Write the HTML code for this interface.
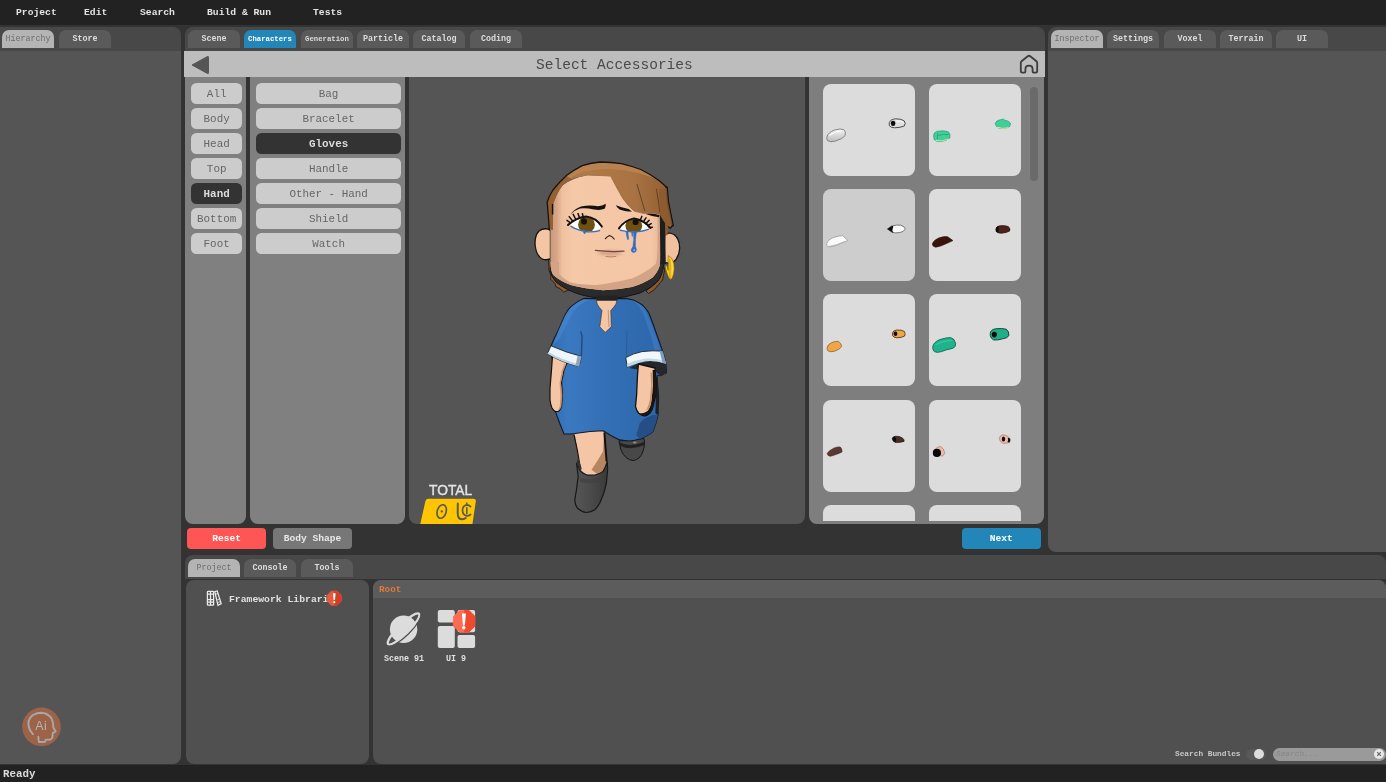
<!DOCTYPE html>
<html>
<head>
<meta charset="utf-8">
<title>Editor</title>
<style>
html,body{margin:0;padding:0;}
body{width:1386px;height:782px;overflow:hidden;background:#333333;font-family:"Liberation Mono",monospace;position:relative;}
.abs{position:absolute;}
.menu,.tab,.btn,.txt{will-change:transform;}
.menubar{left:0;top:0;width:1386px;height:25px;background:#222222;}
.menu{position:absolute;top:0;height:25px;line-height:25px;font-size:9.7px;font-weight:bold;color:#e4e4e4;white-space:pre;}
.strip{background:#484848;}
.tab{position:absolute;height:18px;width:52px;border-radius:7px 7px 0 0;background:#5a5a5a;color:#dcdcdc;font-weight:bold;font-size:8.4px;line-height:19px;text-align:center;white-space:pre;overflow:hidden;}
.tab.sel{background:#b4b4b4;color:#6e6e6e;font-weight:normal;}
.tab.blue{background:#2286b8;color:#ffffff;}
.btn{position:absolute;height:20.8px;border-radius:5.5px;background:#cccccc;color:#666666;font-size:10.9px;line-height:22.4px;text-align:center;white-space:pre;}
.btn.on{background:#333333;color:#dddddd;font-weight:bold;}
.card{position:absolute;width:92px;height:92px;border-radius:8px;background:#dcdcdc;}
</style>
</head>
<body>
<!-- menu bar -->
<div class="abs menubar"></div>
<div class="menu" style="left:15.5px;">Project</div>
<div class="menu" style="left:83.5px;">Edit</div>
<div class="menu" style="left:139.5px;">Search</div>
<div class="menu" style="left:207px;">Build &amp; Run</div>
<div class="menu" style="left:312.5px;">Tests</div>

<!-- left panel -->
<div class="abs strip" style="left:0;top:27px;width:181px;height:24px;border-radius:0 8px 0 0;"></div>
<div class="abs" style="left:0;top:51px;width:181px;height:712.8px;background:#555555;border-radius:0 0 8px 0;"></div>
<div class="tab sel" style="left:2px;top:30px;">Hierarchy</div>
<div class="tab" style="left:58.5px;top:30px;">Store</div>

<!-- center panel -->
<div class="abs strip" style="left:184.8px;top:27px;width:859.8px;height:24px;border-radius:8px 8px 0 0;"></div>
<div id="ctabs"></div>
<div class="tab" style="left:187.8px;top:30px;">Scene</div>
<div class="tab blue" style="left:244.2px;top:30px;font-size:7.3px;">Characters</div>
<div class="tab" style="left:300.5px;top:30px;font-size:7.3px;">Generation</div>
<div class="tab" style="left:356.8px;top:30px;">Particle</div>
<div class="tab" style="left:413.2px;top:30px;">Catalog</div>
<div class="tab" style="left:469.5px;top:30px;">Coding</div>

<!-- header bar -->
<div class="abs" style="left:183.8px;top:51px;width:860.8px;height:26px;background:#bdbdbd;"></div>
<div class="abs txt" style="left:183.8px;top:51px;width:860.8px;height:26px;line-height:28.4px;text-align:center;font-size:14.5px;color:#4a4a4a;">Select Accessories</div>
<svg class="abs" style="left:188.5px;top:54px;" width="24" height="22" viewBox="0 0 24 22"><path d="M3 11 L18.5 2.5 Q19.5 2 19.5 3.2 L19.5 18.8 Q19.5 20 18.5 19.5 Z" fill="#555555" stroke="#555555" stroke-width="1" stroke-linejoin="round"/></svg>
<svg class="abs" style="left:1017px;top:52px;" width="24" height="24" viewBox="1017 52 24 24"><path d="M1020.8 71 V62.8 Q1020.8 62 1021.5 61.3 L1027.8 56.2 Q1029 55.3 1030.2 56.2 L1036.5 61.3 Q1037.2 62 1037.2 62.8 V71 Q1037.2 72.6 1035.6 72.6 H1033.6 Q1032.6 72.6 1032.6 71.6 V69 Q1032.6 65.6 1029 65.6 Q1025.4 65.6 1025.4 69 V71.6 Q1025.4 72.6 1024.4 72.6 H1022.4 Q1020.8 72.6 1020.8 71 Z" fill="none" stroke="#3c3c3c" stroke-width="1.8" stroke-linejoin="round"/></svg>

<!-- category columns -->
<div class="abs" style="left:184.8px;top:77px;width:61px;height:447px;background:#808080;border-radius:0 0 8px 8px;"></div>
<div class="abs" style="left:249.8px;top:77px;width:154.8px;height:447px;background:#808080;border-radius:0 0 8px 8px;"></div>
<div class="btn" style="left:191px;top:83.4px;width:51.3px;">All</div>
<div class="btn" style="left:191px;top:108.25px;width:51.3px;">Body</div>
<div class="btn" style="left:191px;top:133.1px;width:51.3px;">Head</div>
<div class="btn" style="left:191px;top:157.95px;width:51.3px;">Top</div>
<div class="btn on" style="left:191px;top:182.8px;width:51.3px;">Hand</div>
<div class="btn" style="left:191px;top:207.65px;width:51.3px;">Bottom</div>
<div class="btn" style="left:191px;top:232.5px;width:51.3px;">Foot</div>

<div class="btn" style="left:255.8px;top:83.4px;width:145.2px;">Bag</div>
<div class="btn" style="left:255.8px;top:108.25px;width:145.2px;">Bracelet</div>
<div class="btn on" style="left:255.8px;top:133.1px;width:145.2px;">Gloves</div>
<div class="btn" style="left:255.8px;top:157.95px;width:145.2px;">Handle</div>
<div class="btn" style="left:255.8px;top:182.8px;width:145.2px;">Other - Hand</div>
<div class="btn" style="left:255.8px;top:207.65px;width:145.2px;">Shield</div>
<div class="btn" style="left:255.8px;top:232.5px;width:145.2px;">Watch</div>

<!-- viewport -->
<div class="abs" id="viewport" style="left:409px;top:77px;width:396px;height:447px;background:#555555;border-radius:0 0 8px 8px;overflow:hidden;">
<!--CHARSTART--><svg style="position:absolute;left:0;top:0;" width="396" height="447" viewBox="409 77 396 447">
<defs>
<linearGradient id="gHair" x1="0" y1="0" x2="1" y2="0"><stop offset="0" stop-color="#9a6536"/><stop offset="0.25" stop-color="#b07a48"/><stop offset="0.7" stop-color="#a87242"/><stop offset="1" stop-color="#8f5d31"/></linearGradient>
<linearGradient id="gFace" x1="550.4" y1="0" x2="662.3" y2="0" gradientUnits="userSpaceOnUse"><stop offset="0" stop-color="#cc9a7b"/><stop offset="0.055" stop-color="#d6a486"/><stop offset="0.105" stop-color="#efc1a0"/><stop offset="0.2" stop-color="#f5c8a8"/><stop offset="0.9" stop-color="#f4c6a5"/><stop offset="0.95" stop-color="#eebf9e"/><stop offset="0.965" stop-color="#d6a587"/><stop offset="1" stop-color="#d0a082"/></linearGradient>
<linearGradient id="gChin" x1="0" y1="0" x2="0" y2="1"><stop offset="0" stop-color="#d9a384" stop-opacity="0"/><stop offset="0.55" stop-color="#d9a384" stop-opacity="0"/><stop offset="1" stop-color="#cf9a7c" stop-opacity="0.95"/></linearGradient>
<linearGradient id="gDress" x1="0" y1="0" x2="1" y2="0"><stop offset="0" stop-color="#2f6db4"/><stop offset="0.15" stop-color="#3a78c0"/><stop offset="0.5" stop-color="#336fb5"/><stop offset="1" stop-color="#2c66aa"/></linearGradient>
<linearGradient id="gBoot" x1="0" y1="0" x2="1" y2="0"><stop offset="0" stop-color="#565656"/><stop offset="0.5" stop-color="#4a4a4a"/><stop offset="1" stop-color="#3a3a3a"/></linearGradient>
<clipPath id="cEyeL"><path d="M570 224.8 Q576 218.6 586 217 Q596 218.2 601.6 227 Q599 231 588 231.6 Q577 230.2 570 224.8 Z"/></clipPath>
<clipPath id="cEyeR"><path d="M619.4 228.2 Q624 221.6 634 219 Q644 221 649.6 228 Q646 231 635 231.8 Q624 231.8 619.4 228.2 Z"/></clipPath>
<filter id="blur1" x="-20%" y="-50%" width="140%" height="300%"><feGaussianBlur stdDeviation="1.6"/></filter>
<filter id="blur2" x="-10%" y="-30%" width="120%" height="160%"><feGaussianBlur stdDeviation="0.6"/></filter>
<clipPath id="cFace"><use href="#face"/></clipPath>
</defs>

<!-- hair back lower bits -->
<path d="M548.4 258 L549 270 L551 276 L550.6 279 L555 283.6 L556 287 L560 288.6 L563.5 292 L569 290 L558 278 L553 262 Z" fill="#8f5d30" stroke="#1a1410" stroke-width="0.8"/>
<path d="M665 268 L662.5 280 L654 290 L648.5 293.5 L646 291 L656 283 L661 268 Z" fill="#8a5a2e" stroke="#1a1410" stroke-width="0.8"/>

<!-- ears -->
<path d="M553 231 Q545 226.5 539 231 Q534.2 236 535.2 246 Q536.5 256 542.5 259.2 Q548 261 553 257 Z" fill="#f4c6a5" stroke="#141414" stroke-width="1.3"/>
<path d="M662 236 Q668 231 674 234.5 Q680 239 679.6 249 Q678.5 258.5 673 262.2 Q667 264.5 662 261 Z" fill="#f0c09f" stroke="#141414" stroke-width="1.3"/>

<!-- dark jaw band / head back -->
<path d="M550.3 230 L550.3 271 Q551.5 277.5 556 282 Q566 290.5 582 295 Q598 298.8 609 298.8 Q626 297.6 640 293 Q652 288 658 281 Q662.5 275 664 264 L665 232 L664 212 L655 205 L600 190 Z" fill="#2b2b2b" stroke="#141414" stroke-width="1"/>

<!-- face -->
<path id="face" d="M553 204.5 Q556 194 562.5 185.5 Q571 178.5 587.5 175.3 L612 176.3 L660 200 L660.9 235 L660.7 255 Q660.3 262 659.6 266 Q658 271.6 652.6 277.5 Q644 283.4 632 287 Q617 290 603 290.2 Q585 288.8 570.7 285 Q560 281 553.3 275 Q550.6 271 550.4 262 L550.4 230 L552.6 214 Z" fill="url(#gFace)"/>
<path d="M549 262 L559 262 L559 273 Q561 277.4 570 282.2 Q581 284.8 596 285 Q611.6 283.4 632 278.6 Q647.5 271.4 655.7 263.9 Q657.8 258 658.2 240 L658.8 212 L664 212 L664 300 L549 300 Z" fill="#d4a385" filter="url(#blur2)" clip-path="url(#cFace)"/>

<!-- mouth -->
<ellipse cx="610" cy="253" rx="12" ry="2.6" fill="#c98f78" opacity="0.7" filter="url(#blur1)"/>
<path d="M595.3 250.4 Q610 252.2 624 251.2" fill="none" stroke="#6e463a" stroke-width="1.2" stroke-linecap="round"/>
<path d="M605.6 256.5 Q611 257.3 616.2 256.4" fill="none" stroke="#b98068" stroke-width="1"/>
<!-- nose -->
<path d="M605.4 238.6 Q607 236.6 609.6 235.5 Q612.4 236.6 614.2 239" fill="none" stroke="#2c1d16" stroke-width="1.2" stroke-linecap="round"/>

<!-- eyes -->
<path d="M570 224.8 Q576 218.6 586 217 Q596 218.2 601.6 227 Q599 231 588 231.6 Q577 230.2 570 224.8 Z" fill="#ffffff"/>
<g clip-path="url(#cEyeL)"><circle cx="586.5" cy="224.6" r="8.4" fill="#6e5011"/><circle cx="584" cy="221.4" r="3.1" fill="#15100a"/></g>
<path d="M568 225 Q575.5 217.8 586 216.4 Q596.5 217.6 601.8 226.6" fill="none" stroke="#15100c" stroke-width="2" stroke-linecap="round"/>
<path d="M570.6 223 L567 220.4 M572.6 221 L569.2 216.6 M575.6 219 L573.2 214.4 M579.4 217.6 L578 213.6 M583.2 217 L582.4 213.8" fill="none" stroke="#15100c" stroke-width="1.5" stroke-linecap="round"/>
<path d="M571 226.4 Q578 230.6 588 231.8 Q595 232 599.5 230.6" fill="none" stroke="#2f70c6" stroke-width="1.3" stroke-linecap="round"/>
<path d="M582.5 231.6 L584.6 234.2 L586.5 232" fill="#2f70c6"/>

<path d="M619.4 228.2 Q624 221.6 634 219 Q644 221 649.6 228 Q646 231 635 231.8 Q624 231.8 619.4 228.2 Z" fill="#ffffff"/>
<g clip-path="url(#cEyeR)"><circle cx="633.8" cy="225.6" r="8.4" fill="#6e5011"/><circle cx="635.6" cy="222" r="3.1" fill="#15100a"/></g>
<path d="M619 228.4 Q624 220.8 634 218.4 Q644.5 220.2 650.5 228" fill="none" stroke="#15100c" stroke-width="2" stroke-linecap="round"/>
<path d="M640.4 220 L641.8 216.4 M643.4 221.6 L646 217.8 M645.8 223.6 L649.2 220.2 M647.8 225.6 L651.2 223.6 M649.2 227.6 L652.4 227.2" fill="none" stroke="#15100c" stroke-width="1.5" stroke-linecap="round"/>
<path d="M620.4 230.4 Q628 232.2 636 231.8 Q643 231.4 648.4 229.4" fill="none" stroke="#2f70c6" stroke-width="1.3" stroke-linecap="round"/>
<!-- tears -->
<path d="M626 231.4 Q626.6 236 627.6 239.6 Q628.6 240 628.6 238 Q628 234.6 628 231.6 Z" fill="#2f70c6" stroke="#2f70c6" stroke-width="0.6"/>
<path d="M631.2 231.8 L631.8 236.6 Q632.6 237 632.8 236 L633 231.8 Z" fill="#2f70c6"/>
<path d="M633.6 231.8 Q634.2 240 633 246.4 Q630.6 249.6 631.6 251.4 Q633.6 253.4 635.8 251.6 Q637.2 249.6 635.4 246.4 Q635 240 636.4 231.8 Z" fill="#2f70c6" stroke="#2861b0" stroke-width="0.5"/>
<circle cx="634.2" cy="250.2" r="1" fill="#8fb6e6"/>

<!-- eyebrows -->
<path d="M570.4 214.4 Q574 209 581 206.4 Q590 204.8 598 206.2 Q602.6 206 605.6 203.8 Q606.4 206.6 604.6 208.8 Q600 210.6 594 209.4 Q586 207.6 580 208.4 Q574.6 210 570.4 214.4 Z" fill="#17110d"/>
<path d="M616 205.2 Q621 207.2 628.6 209 L632 211.6 Q624 211.2 619.6 209.4 Q616.4 207.6 616 205.2 Z" fill="#17110d"/>

<!-- hair front -->
<path d="M549.4 230 L547.2 202 Q549 196 553 190 Q559 182.5 566.8 175.3 Q574.5 169.5 582.3 165.6 Q591.4 162.8 600.5 162 Q611 162 621.3 163.6 Q630.4 165.6 640.8 169.5 Q650 174 659 180.5 Q664 184.6 666.8 187.7 L668 202 L670.6 215 L672.8 225.4 L670.4 228.2 L668 226.6 Q665 222.4 662.9 220 L659.6 214.8 L655 213.8 L650 213.2 L644.7 213.6 L634.3 211 Q629 207 622.6 198 Q616 186.4 611 176.6 L600.5 176 L587.5 175.3 Q578 177 572 179.2 Q566 182 562.9 185 Q560 188.6 557.7 192.9 Q555 198.4 553 204.6 L553 230 Z" fill="url(#gHair)"/>
<path d="M566.8 175.3 Q574.5 169.5 582.3 165.6 Q591.4 162.8 600.5 162 Q611 162 621.3 163.6 Q630.4 165.6 640.8 169.5 Q650 174 659 180.5 Q650 176 640 173.4 Q625 169.4 610 169 Q592 169 580 173 Q572 176.4 568 180 Z" fill="#bb8552" opacity="0.8"/>
<path d="M549.4 229 L547.8 203 Q550 196 553.6 190.6 Q559.6 183 567 176.2 L572 179.2 Q566 182 562.9 185 Q560 188.6 557.7 192.9 Q555 198.4 553 204.6 L553 229 Z" fill="#8d5c2d" opacity="0.7"/>
<path d="M549.4 230 L547.2 202 Q549 196 553 190 Q559 182.5 566.8 175.3 Q574.5 169.5 582.3 165.6 Q591.4 162.8 600.5 162 Q611 162 621.3 163.6 Q630.4 165.6 640.8 169.5 Q650 174 659 180.5 Q664 184.6 666.8 187.7 L668 202 L670.6 215 L672.8 225.4 L670.4 228.2 L668 226.6" fill="none" stroke="#17120e" stroke-width="1.3" stroke-linejoin="round" stroke-linecap="round"/>
<path d="M552.6 204 L552.6 214.5" stroke="#17120e" stroke-width="1.5"/>
<path d="M666.8 187.7 L668 202 L670.6 215 L672.8 225.4" fill="none" stroke="#17120e" stroke-width="2.2" stroke-linecap="round"/>
<path d="M611 176.8 Q616 186.6 622.6 198.2 Q629 207.2 634.3 211.2 L644.7 213.8" fill="none" stroke="#7a4c24" stroke-width="0.7" opacity="0.8"/>
<path d="M636.9 183.8 Q641 198 644.9 211" fill="none" stroke="#4a2f18" stroke-width="0.7"/>
<path d="M656.4 189 Q658.6 201 659.8 212.4" fill="none" stroke="#4a2f18" stroke-width="0.7"/>
<path d="M659 189 L666.8 188 L668 202 L670.6 215 L672.6 225 L668 226.4 Q665 222 662.9 220 L660 214.6 Z" fill="#8a5a2e" opacity="0.8"/>
<!-- side hair + dark strip right of face under bangs -->
<path d="M663.6 220.6 Q665.6 223 668 226.6 L667.6 235 L664.6 236 Z" fill="#8a5a2e"/>
<path d="M659.8 214.6 L662.9 220.2 L665 223 L665.8 264 L660.4 264 Z" fill="#1e1e1e"/>
<path d="M645 213.8 L650 213.4 L655 214 L659.6 215.2 L659 217.2 L652 216 Z" fill="#17120e"/>

<!-- earring -->
<path d="M668.3 255.6 Q672.4 257.4 673.8 263 Q675 269 673.4 275 Q672.4 278.6 670.8 279.4 Q668.6 278.4 667.6 275 L666.6 272 Q665.2 268.4 665.4 265.8 L667.2 265.6 Q667.4 268.6 668.2 270.4 Q668.6 264 668 259.6 Z" fill="#f6c924" stroke="#6e560c" stroke-width="0.5"/>
<path d="M669.6 259 Q670.8 266 669.8 274 Q669.6 276.4 670.4 278" fill="none" stroke="#c79c0e" stroke-width="0.9"/>
<path d="M671.4 260 Q673.2 266 672.2 274" fill="none" stroke="#ffe26a" stroke-width="0.9" opacity="0.8"/>

<!-- legs / boots -->
<!-- back foot -->
<path d="M618.9 441 L621 450 Q623 455 626 457.4 Q629.6 460.4 633 460.6 Q636.6 460 639 458 Q642 455 643 451 Q644.4 447 644.6 443 L644 438.6 Z" fill="#484848" stroke="#15181c" stroke-width="1"/>
<path d="M619.4 442.6 Q631 447.6 644.4 441.8 L644.4 445 Q631 451 620.2 446 Z" fill="#222222"/>
<ellipse cx="634.8" cy="442.6" rx="2" ry="1" fill="#b47c58"/>
<!-- front leg -->
<path d="M574 430 L604.2 429 L605.1 444.8 L606.4 462 L603 472 L594 476 L586 475 L580.7 470 L577.3 449.8 Z" fill="#f4c6a5"/>
<path d="M604.2 432 L605.1 444.8 L606.4 462 L603.4 471.6 L598 474.4 L591.5 469.8 Q597.5 461 603 451.5 Z" fill="#b98561"/>
<path d="M574 434.9 L577.3 449.8 L580.7 469.8" fill="none" stroke="#15100c" stroke-width="1.1"/>
<path d="M604.4 432.4 L605.3 444.8 L606.6 461.5" fill="none" stroke="#15100c" stroke-width="2"/>
<!-- boot -->
<path d="M576.5 463 L578.2 476.4 L576.5 489.7 L574.8 499.7 Q575 505 577.3 508 Q581.6 512 586.5 512.5 Q591 512 594.8 509.7 Q597.8 507 599.8 503 L603.9 493 L606.4 483 L607.6 469.8 L607.3 461.5 Q605.6 467.6 603 471.4 Q599 474.6 594.8 475 Q590 475.4 586.5 474.8 Q583 473.6 580.7 471.4 Q578.4 467.6 576.5 463 Z" fill="url(#gBoot)" stroke="#15181c" stroke-width="1.2" stroke-linejoin="round"/>
<path d="M576.5 463 Q578.4 467.6 580.7 471.4 L581.6 468 L578 458 Z" fill="#333333"/>
<path d="M580 478 Q590 481 604 476 L603 481 Q590 485 580.4 482 Z" fill="#404040" opacity="0.6"/>

<!-- dress -->
<path id="dress" d="M596 298.6 L583.7 298.4 Q577 301 570.6 306.9 Q567 310.6 565 315 L558.4 329.9 L553.5 340 L550.7 346.8 L552 358 L556 366 L553 390 L555.7 412.4 L560 424 L564 434 Q570 434 575 433.5 L590 431.5 L603 430.7 Q606.6 432.6 610 435 Q615 438 619.7 439.9 Q625 441 630 441 Q635 440.6 639.7 439 Q644 437.4 648 435 Q651 433.4 653 431.5 L656 423 L658 415 L658.6 397 L657 376 L666.5 372.9 L665.8 363.7 L662.7 351.4 L657.3 336 L653.5 325.3 L648.9 313 Q646 308.4 642.8 305.3 Q638 302 633.5 300 L625.9 298.4 L616.7 298.6 Z" fill="url(#gDress)" stroke="#121a26" stroke-width="1.1" stroke-linejoin="round"/>
<!-- dress shading -->
<path d="M643.8 419 L653 415 L658 415 L656 423 L653 431.5 Q651 433.4 648 435 Q644 437.4 639.7 439 L636.3 434.9 L639.7 423.2 Z" fill="#254e86"/>
<path d="M657 377 L658.6 397 L658 415 L655.4 413 L656 395 L655.6 377 Z" fill="#1d1f24"/>
<path d="M580.6 331.4 L582.1 336 L581.4 356" fill="none" stroke="#1f4a82" stroke-width="1.4"/>
<path d="M627 331 L626.4 357" fill="none" stroke="#2a5d9c" stroke-width="1"/>
<path d="M570.6 308 Q575 302.6 583.7 299.4 L590 299.4 Q578 304 573 312 L560 338 L553 345.6 L558.4 330.4 L565 315.4 Z" fill="#4a8ad2" opacity="0.55"/>
<path d="M633 300.6 Q640 303 645 309 L651 323 L657 339 L661 351 L655 351.6 L650 333 L644 316 Q640 306 633 300.6 Z" fill="#4a8ad2" opacity="0.4"/>

<!-- neck -->
<path d="M596 295.6 L618 295.6 L617.2 301.2 L596.6 301.2 Z" fill="#232323"/>
<path d="M596.4 300.4 L617 300.4 Q616.4 304.6 613.4 307.6 L610.8 310.4 L611.3 326.8 L605.2 332.4 L599.8 326.8 L602 310.4 L599.4 307.6 Q596.8 304.6 596.4 300.4 Z" fill="#f4c6a5" stroke="#3a2a22" stroke-width="0.6"/>
<path d="M608.2 310 L609 327" fill="none" stroke="#b88566" stroke-width="0.8"/>

<!-- left arm -->
<path d="M552.5 356 L551.5 370 L550 388.2 L550 400 Q550.6 405 552 408 Q553.6 411 555.7 411.6 Q557.6 411.8 559 411 Q560.8 409.4 561.5 406.6 L562.4 395 L561.5 382 L564 370 L567.4 362 Z" fill="#f4c6a5" stroke="#15100c" stroke-width="1.2" stroke-linejoin="round"/>
<path d="M561 383 L563.4 371 L566.4 364 L564.6 363.6 L561.6 371 L559.6 383 L560.4 396 L559.8 406 L558 410.6 Q560.6 409.6 561.5 406.6 L562.4 395 Z" fill="#c99270" opacity="0.9"/>
<!-- left cuff -->
<path d="M550.9 345.8 Q566 352.6 581.6 356.4 L579 366.4 Q562 362.6 547.4 353.8 Z" fill="#eef6fb" stroke="#1a222c" stroke-width="0.9" stroke-linejoin="round"/>
<path d="M548.4 352 Q563 360.4 579.6 364.2 L579 366.4 Q562 362.6 547.4 353.8 Z" fill="#bcd3e3"/>
<path d="M577.6 355.6 L581.6 356.4 L579 366.4 L575.6 365.6 Z" fill="#8ea4b8"/>

<!-- right cuff underside shadow -->
<path d="M629 368 L640 362.5 L655 361 L665.8 364 L666.5 372.9 L661 376.4 L655 371 L640 370 Z" fill="#25272b"/>
<!-- right arm -->
<path d="M638.4 364 L637.5 375 L636.6 395 L635.5 406.6 Q636.6 411 638.8 413.3 Q641.6 415.8 644.6 415.8 Q647.6 415.4 650 413 Q652.2 410.4 653 406.6 L655.8 395 L656 380 L655 368 Z" fill="#f4c6a5" stroke="#15100c" stroke-width="1.3" stroke-linejoin="round"/>
<path d="M655 369.8 L656 380 L655.8 395 L653 406.6 Q652.2 410.4 650 413 Q647.6 415.4 644.6 415.8 Q641 415.6 638.8 413.3 Q644 414 647.6 411 Q650.6 407.6 651.6 400 L653 385 L652.6 370 Z" fill="#1a1512"/>
<path d="M650.6 372 L651.2 386 L649.8 400 Q648.6 407 645.6 410.6 Q649 409.6 650.6 405 L652.4 392 L652.6 374 Z" fill="#c48d6b"/>
<!-- right cuff -->
<path d="M625.7 357.6 Q633 353.4 642 351.6 Q653 350.2 662.9 351.2 L666 363.8 Q656 360.2 646 361.2 Q636 362.8 627.4 367 Z" fill="#f1f8fc" stroke="#1a222c" stroke-width="0.9" stroke-linejoin="round"/>
<path d="M626.8 364 Q636 360 646 358.6 Q656 357.8 665.4 361 L666 363.8 Q656 360.2 646 361.2 Q636 362.8 627.4 367 Z" fill="#c3d8e6"/>
<path d="M659.6 351 L662.9 351.2 L666 363.8 L662.4 362.4 Z" fill="#7f9cc0"/>
</svg>
<!--CHAREND-->
</div>

<!-- accessories panel -->
<div class="abs" style="left:809.3px;top:77px;width:234.5px;height:446.8px;background:#7e7e7e;border-radius:0 0 8px 8px;"></div>
<div class="abs" id="cards" style="left:809.3px;top:77px;width:234.5px;height:443.7px;overflow:hidden;">
<div class="card" style="left:14.2px;top:6.5px;"></div>
<div class="card" style="left:119.5px;top:6.5px;"></div>
<div class="card" style="left:14.2px;top:111.9px;background:#cdcdcd;"></div>
<div class="card" style="left:119.5px;top:111.9px;"></div>
<div class="card" style="left:14.2px;top:217.3px;"></div>
<div class="card" style="left:119.5px;top:217.3px;"></div>
<div class="card" style="left:14.2px;top:322.7px;"></div>
<div class="card" style="left:119.5px;top:322.7px;"></div>
<div class="card" style="left:14.2px;top:428.1px;"></div>
<div class="card" style="left:119.5px;top:428.1px;"></div>
<!--GLOVESSTART--><svg style="position:absolute;left:0;top:0;" width="234.5" height="443.7" viewBox="809.3 77 234.5 443.7">
<defs>
<linearGradient id="gW" x1="0" y1="0" x2="0" y2="1"><stop offset="0" stop-color="#f4f4f4"/><stop offset="1" stop-color="#bdbdbd"/></linearGradient>
</defs>
<!-- card1: light gray gloves -->
<path d="M827.2 137 Q828 132.6 835 130 Q841 128.2 844 129.6 Q846.6 131.6 845.4 135.6 Q843 139 836 141 Q830 142.6 827.8 140.6 Q826.8 139 827.2 137 Z" fill="url(#gW)" stroke="#6e6e6e" stroke-width="0.8"/>
<path d="M830 135 Q835 131.6 842 131" fill="none" stroke="#ffffff" stroke-width="1.2" stroke-linecap="round" opacity="0.9"/>
<path d="M889.6 122.6 Q890.6 119.4 896 118.8 Q902 118.8 904.6 121 Q906.4 123.4 904.6 126 Q901 127.6 895 127.8 Q890.6 127.6 889.6 125.6 Z" fill="#dedede" stroke="#3c3c3c" stroke-width="0.9"/>
<ellipse cx="893.4" cy="123.4" rx="2.3" ry="2.6" fill="#0c0c0c"/>
<path d="M897 121 Q901 120.6 903.6 122.4" fill="none" stroke="#ffffff" stroke-width="1" stroke-linecap="round"/>
<!-- card2: green -->
<path d="M934 136 Q933.6 132.6 937 131.4 Q944 130 948.6 131.8 Q951 134 950.2 138 Q947 141 941 141.6 Q936 141.6 934.4 139.4 Z" fill="#3fd09a" stroke="#2a9a70" stroke-width="0.7"/>
<path d="M936 140.4 Q942 142.2 949.4 139" fill="none" stroke="#ece6a6" stroke-width="0.9"/>
<path d="M938 133 L937.6 139.6 M938.4 135.4 Q944 134 949 134.6" fill="none" stroke="#2a9a70" stroke-width="0.7"/>
<path d="M995.6 123.6 Q996 120.6 1001 119.8 L1003.6 119 L1005 120.2 Q1009 120.6 1010.6 123 Q1011.2 125.6 1009 127.6 Q1004 128.8 999 128 Q995.8 126.4 995.6 123.6 Z" fill="#3fd09a" stroke="#2a9a70" stroke-width="0.7"/>
<path d="M997.4 127.2 Q1003 129.2 1009 127.6" fill="none" stroke="#ece6a6" stroke-width="0.9"/>
<!-- card3: white -->
<path d="M827 243.6 Q828 239.6 834 237.4 Q840 235.6 843 235.8 L848 240.4 Q842 243.2 836 245.6 Q830 247.4 828 246.6 Q826.6 245.6 827 243.6 Z" fill="#fbfbfb" stroke="#8a8a8a" stroke-width="0.6"/>
<path d="M829 246.4 Q836 245.6 845 241.6" fill="none" stroke="#a8a8a8" stroke-width="0.7"/>
<path d="M887.6 229 L892 226 Q897 224.6 901 225.2 Q905 226.4 905.6 229 Q904.6 231.6 900 232.6 Q895 233.2 892.6 232.4 Z" fill="#fafafa" stroke="#4a4a4a" stroke-width="0.7"/>
<path d="M887.6 229 L892 226 L893.6 226 L892.6 230.4 L893.6 232.6 L892.6 232.4 Z" fill="#0c0c0c"/>
<!-- card4: dark brown -->
<path d="M932.6 244 Q933.6 240.4 939 238 Q945 236 948 236.8 L953.2 240.6 L948 243 Q941 246.6 936 247.2 Q933 246.8 932.6 244 Z" fill="#3a130a" stroke="#2a0c06" stroke-width="0.6"/>
<path d="M996.2 229 Q996.6 226.4 1000 225.8 Q1005 225.2 1008.6 226.6 Q1010.8 228.4 1010 231 Q1007 232.8 1002 233.2 Q997.6 233.2 996.4 231.4 Z" fill="#4a2418" stroke="#24100a" stroke-width="0.7"/>
<path d="M996.2 229 Q996.6 226.6 999 226 L998.6 232.6 Q996.8 232 996.4 231.4 Z" fill="#0c0c0c"/>
<!-- card5: orange -->
<path d="M827.4 348 Q827.6 344.6 832 342.6 Q836 341 838.6 341.4 Q841.6 343 842 346.6 Q840 349.6 835 351.2 Q830.6 352.4 828.4 351 Q827.2 349.8 827.4 348 Z" fill="#eda648" stroke="#8a5a1c" stroke-width="0.7"/>
<path d="M892.8 333 Q893.2 330.4 897 330 Q902 329.8 904.6 331.4 Q906 333.6 905 336 Q902 337.8 897 337.8 Q893.6 337.4 892.8 335.6 Z" fill="#eda648" stroke="#5a3a12" stroke-width="0.9"/>
<ellipse cx="895.8" cy="333.8" rx="1.9" ry="2.2" fill="#0c0c0c"/>
<!-- card6: teal -->
<path d="M933 347 Q933.4 342.6 940 339.6 Q947 337.4 951 337.6 Q955 338.6 956 343.6 Q956.4 347 953 348.4 Q946 349.6 942 351.6 Q937 353.2 934.6 351.6 Q932.8 349.8 933 347 Z" fill="#20b38b" stroke="#0e5e48" stroke-width="0.8"/>
<path d="M936 345 Q942 341 952 340.4" fill="none" stroke="#3fcfa6" stroke-width="1.2" stroke-linecap="round" opacity="0.7"/>
<path d="M990.6 333 Q991 329.6 996 328.8 Q1002 328 1006.6 329.2 Q1009.6 331.4 1009.2 335.6 Q1007.6 338.4 1003 338.8 Q998 340.4 994 340 Q991 338.6 990.6 335.6 Z" fill="#1fae87" stroke="#0c3c30" stroke-width="0.9"/>
<ellipse cx="994.6" cy="334.6" rx="2.5" ry="2.8" fill="#0a0a0a"/>
<!-- card7: brown -->
<path d="M827.4 453.6 Q829 450.6 834 448.2 Q838 446.6 840.6 447 Q842.4 448.6 842.4 452 Q837 454.6 831 456.2 Q828 456.4 827.4 453.6 Z" fill="#5c3832" stroke="#3a201c" stroke-width="0.6"/>
<path d="M892.6 438.6 Q893 436.4 896 436.2 Q900.6 436.2 903 438.2 Q904.8 440 904.4 441.4 Q900 442.8 895.6 442.4 Q892.8 441.4 892.6 438.6 Z" fill="#4a2e28" stroke="#1c0e0c" stroke-width="0.7"/>
<path d="M892.6 438.6 Q893 436.6 895.4 436.4 L896.6 439 L895.6 442.2 Q893 441.4 892.6 438.6 Z" fill="#0c0c0c"/>
<!-- card8: pink/black -->
<path d="M935.6 449 Q938 446.4 941 446.6 Q944 448 945 452.6 Q944.6 455.4 942 456.4 L938 452 Z" fill="#f1b9a8" stroke="#8a5a50" stroke-width="0.5"/>
<circle cx="937.2" cy="452.9" r="4.1" fill="#060606"/>
<path d="M999.6 438.4 Q1000 435.4 1003 434.8 Q1006 434.8 1008 436.4 L1010.4 438.6 Q1011 441 1009.6 442.6 Q1006 443.6 1003 443.2 Q999.8 441.6 999.6 438.4 Z" fill="#f1b9a8" stroke="#8a5a50" stroke-width="0.5"/>
<ellipse cx="1003.8" cy="439" rx="1.7" ry="2.6" fill="#0a0a0a"/>
<path d="M1008 437.4 L1010.4 438.8 Q1011 441 1009.6 442.4 L1007.8 442 Q1009 440 1008 437.4 Z" fill="#0a0a0a"/>
</svg>
<!--GLOVESEND-->
</div>
<div class="abs" style="left:1029.8px;top:86.5px;width:8.2px;height:94px;border-radius:4px;background:#6a6a6a;"></div>

<!-- action buttons -->
<div class="abs txt" style="left:187.3px;top:528px;width:79.3px;height:21px;border-radius:4px;background:#ff5555;color:#ffffff;font-weight:bold;font-size:9.6px;line-height:21px;text-align:center;">Reset</div>
<div class="abs txt" style="left:273px;top:528px;width:79px;height:21px;border-radius:4px;background:#777777;color:#e8e8e8;font-weight:bold;font-size:9.6px;line-height:21px;text-align:center;">Body Shape</div>
<div class="abs txt" style="left:962.2px;top:527.8px;width:78.7px;height:21px;border-radius:4px;background:#2286b8;color:#ffffff;font-weight:bold;font-size:9.6px;line-height:21px;text-align:center;">Next</div>

<!-- right panel -->
<div class="abs strip" style="left:1047.5px;top:27px;width:338.5px;height:24px;border-radius:8px 0 0 0;"></div>
<div class="abs" style="left:1047.5px;top:51px;width:338.5px;height:500.6px;background:#555555;border-radius:0 0 0 8px;"></div>
<div class="tab sel" style="left:1051px;top:30px;">Inspector</div>
<div class="tab" style="left:1107.3px;top:30px;">Settings</div>
<div class="tab" style="left:1163.6px;top:30px;">Voxel</div>
<div class="tab" style="left:1219.9px;top:30px;">Terrain</div>
<div class="tab" style="left:1276.2px;top:30px;">UI</div>

<!-- bottom panel -->
<div class="abs strip" style="left:184.8px;top:555px;width:1201.2px;height:24px;border-radius:8px 8px 0 0;"></div>
<div class="tab sel" style="left:187.8px;top:558.5px;">Project</div>
<div class="tab" style="left:244.2px;top:558.5px;">Console</div>
<div class="tab" style="left:300.5px;top:558.5px;">Tools</div>

<div class="abs" style="left:185.8px;top:580px;width:183.7px;height:183.8px;background:#505050;border-radius:8px;"></div>
<div class="abs" style="left:373px;top:580px;width:1013px;height:183.8px;background:#505050;border-radius:8px 8px 0 8px;overflow:hidden;">
  <div style="position:absolute;left:0;top:0;width:100%;height:18px;background:#5c5c5c;"></div>
</div>
<div class="abs txt" style="left:378.5px;top:581px;height:18px;line-height:18px;font-size:9.3px;font-weight:bold;color:#e07b39;">Root</div>

<div class="abs txt" style="left:228.5px;top:593.2px;height:14px;line-height:14px;font-size:9.75px;font-weight:bold;color:#e0e0e0;white-space:pre;">Framework Librari</div>
<div class="abs txt" style="left:372.8px;top:652px;width:62px;text-align:center;font-size:8.4px;font-weight:bold;color:#e0e0e0;line-height:14px;white-space:pre;">Scene 91</div>
<div class="abs txt" style="left:425px;top:652px;width:62px;text-align:center;font-size:8.4px;font-weight:bold;color:#e0e0e0;line-height:14px;white-space:pre;">UI 9</div>
<!--ICONSSTART--><svg class="abs" style="left:0;top:580px;" width="500" height="184" viewBox="0 580 500 184">
<!-- library icon -->
<g fill="none" stroke="#ececec" stroke-width="1.25">
<rect x="207.4" y="591.4" width="6.2" height="13.8" rx="0.8"/>
<path d="M210.5 591.4 V605.2 M207.4 594.2 H213.6 M207.4 599.6 H213.6 M207.4 602 H213.6"/>
<path d="M214.8 591.6 L217.2 591 L221.2 603.6 L218 605.4 Z"/>
<path d="M215.6 594.2 L218 593.6 M218.2 602.4 L220.6 601.4 M217.4 599.8 L219.8 598.8" stroke-width="0.9"/>
</g>
<!-- badge 1 -->
<g>
<clipPath id="cb1"><path d="M331.3 591.2 H337.1 L341.2 595.3 V601.1 L337.1 605.2 H331.3 L327.2 601.1 V595.3 Z"/></clipPath>
<path d="M331.3 591.2 H337.1 L341.2 595.3 V601.1 L337.1 605.2 H331.3 L327.2 601.1 V595.3 Z" fill="#e9593f" stroke="#e9593f" stroke-width="0.8" stroke-linejoin="round"/>
<rect x="334.2" y="590" width="8" height="16" fill="#d43c23" clip-path="url(#cb1)"/>
<path d="M333 593.2 H335.6 L335 600 H333.6 Z" fill="#ffffff"/>
<circle cx="334.3" cy="602.2" r="1.1" fill="#ffffff"/>
</g>
<!-- planet -->
<g transform="translate(403.6 629.1) rotate(-44.5)">
<ellipse cx="0" cy="0" rx="21.6" ry="5.1" fill="none" stroke="#dcdcdc" stroke-width="2.4"/>
</g>
<circle cx="403.6" cy="629.3" r="13.7" fill="#dcdcdc"/>
<g transform="translate(403.6 629.1) rotate(-44.5)">
<path d="M-23.4 0 A23.4 6.9 0 0 0 23.4 0" fill="none" stroke="#505050" stroke-width="1.2"/>
</g>
<!-- UI icon -->
<rect x="437.8" y="610" width="17" height="12.4" rx="2" fill="#dcdcdc"/>
<rect x="437.8" y="626" width="17" height="21.9" rx="2" fill="#dcdcdc"/>
<rect x="457.5" y="610" width="17.6" height="22.2" rx="2" fill="#dcdcdc"/>
<rect x="457.5" y="634.9" width="17.6" height="13" rx="2" fill="#dcdcdc"/>
<clipPath id="cb2"><rect x="450" y="608" width="25.2" height="28"/></clipPath>
<g clip-path="url(#cb2)">
<path d="M459.7 610.4 H468.7 L475.1 616.8 V625.8 L468.7 632.2 H459.7 L453.3 625.8 V616.8 Z" fill="#ff6b52" stroke="#ff6b52" stroke-width="0.8" stroke-linejoin="round"/>
<path d="M464.2 610 H468.9 L475.5 616.6 V626 L468.9 632.6 H464.2 Z" fill="#f04a2e"/>
<path d="M461.9 613.4 H465.9 L464.9 625.4 H462.9 Z" fill="#ffffff"/>
<circle cx="463.8" cy="627.7" r="1.7" fill="#ffffff"/>
</g>
</svg>
<!-- AI icon -->
<svg class="abs" style="left:20px;top:705px;" width="44" height="44" viewBox="20 705 44 44">
<circle cx="41.5" cy="726.9" r="19.3" fill="#9c6348"/>
<path d="M32.9 734.2 Q28.6 729.6 28.4 723.4 Q28.8 718 33 715 Q37 712.8 41.5 712.8 Q46.8 713 50.9 717.5 Q53.2 721 53.3 727.5 L55.6 731.4 L52.8 732.8 L52.4 737 Q52.2 739.2 50.4 739.5 L45.8 739.6 L45 741.8 L39 742 Q38.4 741 38.4 736.8" fill="none" stroke="#a9a9a9" stroke-width="1.9" stroke-linecap="round" stroke-linejoin="round"/>
<text x="41.2" y="730.3" text-anchor="middle" font-family="Liberation Sans, sans-serif" font-size="12.4" letter-spacing="0.4" fill="#b4b4b4">Ai</text>
</svg>
<!-- TOTAL -->
<div class="abs txt" style="left:429.2px;top:482.9px;height:16px;line-height:16px;font-family:'Liberation Sans',sans-serif;font-size:13.8px;color:#e4e4e4;-webkit-text-stroke:0.35px #e4e4e4;">TOTAL</div>
<svg class="abs" style="left:415px;top:495px;" width="66" height="29" viewBox="415 495 66 29">
<path d="M428.4 498.8 H473.6 Q476.2 498.8 475.8 501.4 L472 527 H419.6 L425.4 501.2 Q426 498.8 428.4 498.8 Z" fill="#ffc500"/>
<g fill="none" stroke="#5a5a58" stroke-width="1.7" stroke-linecap="round">
<ellipse cx="441.7" cy="511.5" rx="4.5" ry="6.9" transform="rotate(17 441.7 511.5)"/>
<path d="M457.8 503.6 L457.7 513.6 Q458 519.2 462.2 519.3 Q464.4 519.2 465.8 518" stroke-width="2"/>
<path d="M470.6 506.7 Q469 505 466.8 504.9 Q462.6 505.6 462.5 510.3 Q462.6 515.2 466.8 515.9 Q469 515.9 470.6 514.5"/>
<path d="M466.8 507.8 L466.8 513.8" stroke-width="1.6"/>
<path d="M466.8 503 L466.8 504.3" stroke-width="1.5"/>
</g>
<circle cx="441.8" cy="511.5" r="1.15" fill="#5a5a58"/>
</svg>
<!--ICONSEND-->

<div class="abs txt" style="left:1175px;top:747px;height:14px;line-height:14px;font-size:7.8px;font-weight:bold;color:#c8c8c8;white-space:pre;">Search Bundles</div>
<div class="abs" style="left:1246px;top:748.5px;width:20px;height:11px;border-radius:6px;background:#585858;"></div>
<div class="abs" style="left:1254px;top:749px;width:10px;height:10px;border-radius:5px;background:#dddddd;"></div>
<div class="abs" style="left:1272.5px;top:747.5px;width:113.5px;height:13px;border-radius:6.5px;background:#9a9a9a;"></div>
<div class="abs txt" style="left:1276px;top:747.5px;height:13px;line-height:13px;font-size:7.8px;font-style:italic;color:#868686;white-space:pre;">Search...</div>
<div class="abs" style="left:1374px;top:749px;width:10px;height:10px;border-radius:5px;background:#e8e8e8;"></div>
<svg class="abs" style="left:1374px;top:749px;" width="10" height="10" viewBox="0 0 10 10"><path d="M3.2 3.2 L6.8 6.8 M6.8 3.2 L3.2 6.8" stroke="#666" stroke-width="1.2"/></svg>

<!-- status bar -->
<div class="abs" style="left:0;top:764.7px;width:1386px;height:18px;background:#222222;"></div>
<div class="abs txt" style="left:2.9px;top:765px;height:18px;line-height:18px;font-size:10.8px;font-weight:bold;color:#dcdcdc;">Ready</div>

</body>
</html>
